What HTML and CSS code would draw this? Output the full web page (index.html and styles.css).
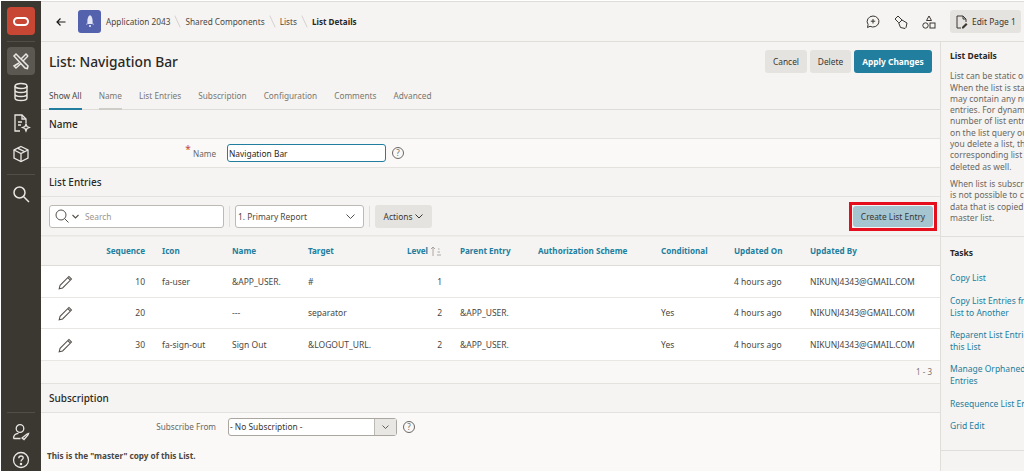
FILE: index.html
```html
<!DOCTYPE html>
<html>
<head>
    <title>List Details</title>
    <link rel="stylesheet" href="styles.css">
</head>
<body>
    <div class="app">
        <nav class="rail">
            <div class="logo"><span class="logo-ring"></span></div>
            <div class="rail-line"></div>
            <a class="rail-item active">
                <svg width="20" height="20" viewBox="0 0 20 20" fill="none" stroke="#e8e6e3" stroke-width="1.5"><path d="M3 5l2-2 12 12-.6 2.6L14 17z"/><path d="M17 5l-2-2-5 5M8 12l-5 3 2 2 5-4.500"/><path d="M12 10l5-5"/></svg>
            </a>
            <a class="rail-item">
                <svg width="18" height="20" viewBox="0 0 18 20" fill="none" stroke="#e8e6e3" stroke-width="1.4"><ellipse cx="9" cy="4" rx="6" ry="2.500"/><path d="M3 4v12c0 1.400 2.700 2.500 6 2.500s6-1.100 6-2.500V4M3 8c0 1.400 2.700 2.500 6 2.500S15 9.400 15 8M3 12c0 1.400 2.700 2.500 6 2.500s6-1.100 6-2.500"/></svg>
            </a>
            <a class="rail-item">
                <svg width="20" height="20" viewBox="0 0 20 20" fill="none" stroke="#e8e6e3" stroke-width="1.3"><path d="M9 18H4V2h7l4 4v4"/><path d="M11 2v4h4M7 9h4M7 12h3"/><path d="M15 11l1 2.500 2.500 1-2.500 1-1 2.500-1-2.500-2.500-1 2.500-1z"/></svg>
            </a>
            <a class="rail-item">
                <svg width="18" height="18" viewBox="0 0 18 18" fill="none" stroke="#e8e6e3" stroke-width="1.3"><path d="M9 1.500l7 3.500v8l-7 3.500L2 13V5z"/><path d="M2 5l7 3.500L16 5M9 8.500v8M5.500 3.200l7 3.500"/></svg>
            </a>
            <div class="rail-line mid"></div>
            <a class="rail-item">
                <svg width="18" height="18" viewBox="0 0 18 18" fill="none" stroke="#e8e6e3" stroke-width="1.5"><circle cx="7.500" cy="7.500" r="5.500"/><path d="M11.500 11.500L17 17"/></svg>
            </a>
            <div class="rail-spacer"></div>
            <div class="rail-line"></div>
            <a class="rail-item foot">
                <svg width="18" height="18" viewBox="0 0 18 18" fill="none" stroke="#e8e6e3" stroke-width="1.3"><circle cx="8" cy="5.500" r="3.800"/><path d="M1.500 15.500c0-3 2-5 5-5.200M1.500 15.500h7M10 15l5-4 1.500-.5-.5 1.500-4 4.500z"/></svg>
            </a>
            <a class="rail-item foot last">
                <svg width="18" height="18" viewBox="0 0 18 18" fill="none" stroke="#e8e6e3" stroke-width="1.3"><circle cx="9" cy="9" r="7.500"/><path d="M6.800 7.200C6.800 5.800 7.800 5 9 5s2.200.8 2.200 2c0 1.500-2.200 1.700-2.200 3.500"/><circle cx="9" cy="13" r=".6" fill="#e8e6e3"/></svg>
            </a>
        </nav>

        <div class="main">
            <header class="topbar">
                <svg class="back" width="10" height="10" viewBox="0 0 10 10" fill="none" stroke="#1d1b19" stroke-width="1.2"><path d="M9.500 5H1M4.500 1.500L1 5l3.500 3.500"/></svg>
                <div class="app-icon">
                    <svg width="10" height="13" viewBox="0 0 10 13"><path d="M5 0c2 1.500 2.600 3.500 2.600 6v3H2.400V6C2.400 3.500 3 1.500 5 0z" fill="#e4e6f5"/><path d="M2.400 7L1 10l1.400-.5zM7.600 7L9 10l-1.400-.5z" fill="#c6cbe9"/><path d="M4 10h2v2H4z" fill="#c6cbe9"/></svg>
                </div>
                <div class="crumbs">
                    <span>Application 2043</span><i class="slash"></i>
                    <span>Shared Components</span><i class="slash"></i>
                    <span>Lists</span><i class="slash"></i>
                    <b>List Details</b>
                </div>
                <div class="top-tools">
                    <svg width="14" height="14" viewBox="0 0 14 14" fill="none" stroke="#3a3632"><path d="M7 1a6 5.500 0 1 1-3 10.300L1.500 12.500l.6-3A6 5.500 0 0 1 7 1zM7 4v4.500M4.800 6.200h4.400"/></svg>
                    <svg width="14" height="14" viewBox="0 0 14 14" fill="none" stroke="#3a3632"><path d="M1 4l3-3 4 4 5 3-1 4.500-1 1-4.500-1-2-5z"/><path d="M8 5L5 8"/></svg>
                    <svg width="14" height="14" viewBox="0 0 14 14" fill="none" stroke="#3a3632"><path d="M7 1l2.500 4.500h-5z"/><circle cx="3.500" cy="10.500" r="2.700"/><rect x="8" y="8" width="5" height="5"/></svg>
                    <button class="btn edit-page">
                        <svg width="14" height="14" viewBox="0 0 14 14" fill="none" stroke="#3a3632"><path d="M6 13H2V1h6l3 3v3M8 1v3h3"/><path d="M7 12l4-4 1.500 1.500-4 4H7z" fill="#3a3632" stroke="none"/></svg>
                        Edit Page 1
                    </button>
                </div>
            </header>

            <div class="columns">
                <div class="content">
                    <div class="title-row">
                        <h1>List: Navigation Bar</h1>
                        <div class="title-actions">
                            <button class="btn cancel">Cancel</button>
                            <button class="btn delete">Delete</button>
                            <button class="btn primary">Apply Changes</button>
                        </div>
                    </div>

                    <div class="tabs">
                        <a class="tab current">Show All</a>
                        <a class="tab hovered">Name</a>
                        <a class="tab">List Entries</a>
                        <a class="tab">Subscription</a>
                        <a class="tab">Configuration</a>
                        <a class="tab">Comments</a>
                        <a class="tab">Advanced</a>
                    </div>

                    <h2 class="section-head">Name</h2>
                    <div class="form-row">
                        <label class="form-label"><sup class="req">*</sup> Name</label>
                        <input class="text-input" type="text" value="Navigation Bar">
                        <span class="help">?</span>
                    </div>

                    <h2 class="section-head">List Entries</h2>
                    <div class="toolbar">
                        <div class="search-box">
                            <svg width="14" height="14" viewBox="0 0 14 14" fill="none" stroke="#55504b"><circle cx="6" cy="6" r="5"/><path d="M9.500 9.500L13.500 13.500"/></svg>
                            <svg width="7" height="5" viewBox="0 0 7 5" fill="none" stroke="#55504b" stroke-width="1.100"><path d="M.5 1l3 3 3-3"/></svg>
                            <span class="placeholder">Search</span>
                        </div>
                        <i class="tool-sep"></i>
                        <div class="report-select">
                            <span>1. Primary Report</span>
                            <svg width="9" height="5" viewBox="0 0 9 5" fill="none" stroke="#55504b"><path d="M.5.5l4 4 4-4"/></svg>
                        </div>
                        <i class="tool-sep"></i>
                        <button class="btn actions">Actions
                            <svg width="8" height="5" viewBox="0 0 8 5" fill="none" stroke="#3a3632"><path d="M.5.5L4 4 7.500.5"/></svg>
                        </button>
                        <div class="create-mark">
                            <button class="btn create">Create List Entry</button>
                        </div>
                    </div>

                    <table class="report">
                        <colgroup>
                            <col class="c-edit"><col class="c-seq"><col class="c-icon"><col class="c-name"><col class="c-target"><col class="c-level"><col class="c-parent"><col class="c-auth"><col class="c-cond"><col class="c-on"><col class="c-by">
                        </colgroup>
                        <thead>
                            <tr>
                                <th></th>
                                <th class="num">Sequence</th>
                                <th>Icon</th>
                                <th>Name</th>
                                <th>Target</th>
                                <th class="num">Level
                                    <svg class="sort" width="12" height="10" viewBox="0 0 12 10" fill="none" stroke="#9a9690" stroke-width=".8"><path d="M3 10V1M1 3l2-2 2 2"/><path d="M8 3h1.500M7.500 6h2.500M7 9h4"/></svg>
                                </th>
                                <th>Parent Entry</th>
                                <th>Authorization Scheme</th>
                                <th>Conditional</th>
                                <th>Updated On</th>
                                <th>Updated By</th>
                            </tr>
                        </thead>
                        <tbody>
                            <tr>
                                <td class="edit"><svg width="15" height="15" viewBox="0 0 13 13" fill="none" stroke="#55504b" stroke-width=".9"><path d="M1 12l.8-3L9.500 1.300l2.200 2.200L4 11.200zM8.500 2.300l2.200 2.200"/></svg></td>
                                <td class="num">10</td><td>fa-user</td><td>&amp;APP_USER.</td><td>#</td><td class="num">1</td><td></td><td></td><td></td><td>4 hours ago</td><td>NIKUNJ4343@GMAIL.COM</td>
                            </tr>
                            <tr>
                                <td class="edit"><svg width="15" height="15" viewBox="0 0 13 13" fill="none" stroke="#55504b" stroke-width=".9"><path d="M1 12l.8-3L9.500 1.300l2.200 2.200L4 11.200zM8.500 2.300l2.200 2.200"/></svg></td>
                                <td class="num">20</td><td></td><td>---</td><td>separator</td><td class="num">2</td><td>&amp;APP_USER.</td><td></td><td>Yes</td><td>4 hours ago</td><td>NIKUNJ4343@GMAIL.COM</td>
                            </tr>
                            <tr>
                                <td class="edit"><svg width="15" height="15" viewBox="0 0 13 13" fill="none" stroke="#55504b" stroke-width=".9"><path d="M1 12l.8-3L9.500 1.300l2.200 2.200L4 11.200zM8.500 2.300l2.200 2.200"/></svg></td>
                                <td class="num">30</td><td>fa-sign-out</td><td>Sign Out</td><td>&amp;LOGOUT_URL.</td><td class="num">2</td><td>&amp;APP_USER.</td><td></td><td>Yes</td><td>4 hours ago</td><td>NIKUNJ4343@GMAIL.COM</td>
                            </tr>
                        </tbody>
                    </table>
                    <div class="report-footer">1 - 3</div>

                    <h2 class="section-head">Subscription</h2>
                    <div class="form-row sub">
                        <label class="form-label">Subscribe From</label>
                        <div class="sub-select">
                            <span>- No Subscription -</span>
                            <i class="sub-arrow"><svg width="7" height="4" viewBox="0 0 7 4" fill="none" stroke="#55504b" stroke-width=".9"><path d="M.5.5l3 3 3-3"/></svg></i>
                        </div>
                        <span class="help">?</span>
                    </div>
                    <p class="master-note">This is the "master" copy of this List.</p>
                </div>

                <aside class="side">
                    <div class="side-block">
                        <h3>List Details</h3>
                        <p>List can be static or dynamic.<br>When the list is static, it<br>may contain any number of<br>entries. For dynamic lists, the<br>number of list entries depends<br>on the list query output. When<br>you delete a list, the<br>corresponding list entries are<br>deleted as well.</p>
                        <p>When list is subscribed, it<br>is not possible to change the<br>data that is copied from the<br>master list.</p>
                    </div>
                    <div class="side-block tasks">
                        <h3>Tasks</h3>
                        <a>Copy List</a>
                        <a>Copy List Entries from one<br>List to Another</a>
                        <a>Reparent List Entries in<br>this List</a>
                        <a>Manage Orphaned List<br>Entries</a>
                        <a>Resequence List Entries</a>
                        <a>Grid Edit</a>
                    </div>
                </aside>
            </div>
        </div>
    </div>
</body>
</html>
```

FILE: styles.css
```css
* {
    box-sizing: border-box;
}

html, body {
    margin: 0;
    height: 471px;
    overflow: hidden;
}

body {
    font-family: "Noto Sans", sans-serif;
    font-size: 8.4px;
    color: #3a3632;
    background-color: #fff;
    padding: 1px 0 0 1px;
}

.app {
    display: flex;
    height: 470px;
    width: 1023px;
}

.rail {
    width: 40px;
    flex: none;
    display: flex;
    flex-direction: column;
    align-items: center;
    background-color: #3b3731;
    padding-top: 6px;
    overflow: hidden;
}

.logo {
    width: 28px;
    height: 28px;
    background-color: #c74634;
    border-radius: 4px;
    display: flex;
    align-items: center;
    justify-content: center;
}

.logo-ring {
    width: 16px;
    height: 9px;
    border: 2px solid #fff;
    border-radius: 5px;
}

.rail-line {
    width: 28px;
    height: 1px;
    background-color: #514d47;
    margin: 6px 0 5px;
    flex: none;
}

.rail-line.mid {
    margin-top: 3px;
}

.rail-item {
    width: 28px;
    height: 28px;
    flex: none;
    margin-bottom: 3px;
    border-radius: 4px;
    display: flex;
    align-items: center;
    justify-content: center;
}

.rail-item.active {
    background-color: #5b5751;
}

.rail-item.foot {
    margin-bottom: 0;
}

.rail-item.last {
    margin-bottom: -3px;
}

.rail-spacer {
    flex: 1;
}

.main {
    flex: 1;
    min-width: 0;
    display: flex;
    flex-direction: column;
    background-color: #f5f4f2;
    border-top: 1px solid #dedcd9;
}

.topbar {
    height: 40px;
    flex: none;
    display: flex;
    align-items: center;
    padding-left: 15px;
    border-bottom: 1px solid #e0dedb;
}

.back {
    margin-right: 12px;
}

.app-icon {
    width: 23px;
    height: 23px;
    background-color: #5462ae;
    border-radius: 3px;
    display: flex;
    align-items: center;
    justify-content: center;
    margin-right: 5px;
}

.crumbs {
    display: flex;
    align-items: center;
    font-size: 8.25px;
    color: #4b4742;
}

.crumbs b {
    font-size: 8.1px;
    color: #2b2825;
}

.slash {
    width: 1px;
    height: 13px;
    background-color: #d5d2ce;
    transform: rotate(-25deg);
    margin: 0 7px;
}

.top-tools {
    margin-left: auto;
    display: flex;
    align-items: center;
    gap: 14px;
    margin-right: 3px;
}

.btn {
    font-family: inherit;
    font-size: 8.4px;
    color: #3a3632;
    background-color: #e5e3df;
    border: none;
    border-radius: 3px;
    height: 23px;
    padding: 0;
    white-space: nowrap;
}

.edit-page {
    display: flex;
    align-items: center;
    gap: 3px;
    padding-left: 5px;
    width: 71px;
}

.columns {
    flex: 1;
    display: flex;
    min-height: 0;
}

.content {
    width: 900px;
    flex: none;
    border-right: 1px solid #e0dedb;
}

.title-row {
    height: 38px;
    display: flex;
    align-items: center;
    justify-content: space-between;
    padding: 0 8px;
}

.title-row h1 {
    margin: 0;
    font-size: 13.8px;
    font-weight: 500;
    color: #2b2825;
}

.title-actions {
    display: flex;
    gap: 3px;
}

.cancel {
    width: 42px;
}

.delete {
    width: 41px;
}

.btn.primary {
    width: 78px;
    background-color: #227e9e;
    color: #fff;
    font-weight: 700;
}

.tabs {
    height: 30px;
    display: flex;
    gap: 17px;
    padding-left: 8px;
    font-size: 8.25px;
    border-bottom: 1px solid #dedcd9;
}

.tab {
    height: 30px;
    padding-top: 10px;
    color: #7a7670;
    border-bottom: 2px solid transparent;
}

.tab.current {
    color: #4b4742;
    border-bottom-color: #227e9e;
}

.tab.hovered {
    border-bottom-color: #d0cdc9;
}

.section-head {
    margin: 0;
    height: 29px;
    line-height: 28px;
    padding-left: 8px;
    font-size: 10px;
    font-weight: 500;
    color: #2b2825;
    border-bottom: 1px solid #e4e2df;
}

.form-row {
    height: 29px;
    display: flex;
    align-items: center;
    background-color: #faf9f8;
    border-bottom: 1px solid #e4e2df;
}

.form-label {
    width: 176px;
    padding-right: 1px;
    text-align: right;
    font-size: 8.2px;
    color: #6b6762;
    flex: none;
}

.req {
    color: #c74634;
    font-size: 10px;
    line-height: 0;
}

.text-input {
    width: 159px;
    height: 18px;
    margin-left: 10px;
    padding: 0 1px;
    font-family: inherit;
    font-size: 8.4px;
    color: #2b2825;
    border: 1.5px solid #227e9e;
    border-radius: 3px;
    background-color: #fff;
}

.help {
    width: 12px;
    height: 12px;
    margin-left: 6px;
    border: 1px solid #6b6762;
    border-radius: 50%;
    font-size: 8px;
    line-height: 10px;
    text-align: center;
    color: #6b6762;
    flex: none;
}

.toolbar {
    height: 39px;
    display: flex;
    align-items: center;
    padding-left: 8px;
    border-bottom: 1px solid #e9e7e4;
    box-shadow: 0 1px 0 #efedea;
}

.search-box {
    width: 175px;
    height: 23px;
    display: flex;
    align-items: center;
    gap: 3px;
    padding-left: 5px;
    background-color: #fff;
    border: 1px solid #bdb9b4;
    border-radius: 3px;
}

.placeholder {
    margin-left: 3px;
    color: #9a9690;
}

.tool-sep {
    width: 1px;
    height: 21px;
    margin: 0 5px;
    background-color: #e0dedb;
}

.report-select {
    width: 129px;
    height: 23px;
    display: flex;
    align-items: center;
    justify-content: space-between;
    padding: 0 8px 0 2px;
    background-color: #fff;
    border: 1px solid #bdb9b4;
    border-radius: 3px;
    color: #4b4742;
}

.actions {
    display: flex;
    align-items: center;
    gap: 3px;
    width: 57px;
    justify-content: center;
}

.create-mark {
    margin-left: auto;
    margin-right: 3px;
    padding: 1px;
    border: 3px solid #e50e1c;
    display: flex;
}

.create {
    width: 80px;
    height: 21px;
    background-color: #a5c5d1;
}

.report {
    width: 899px;
    table-layout: fixed;
    border-collapse: collapse;
}

.c-edit { width: 49px; }
.c-seq { width: 72px; }
.c-icon { width: 70px; }
.c-name { width: 76px; }
.c-target { width: 92px; }
.c-level { width: 60px; }
.c-parent { width: 78px; }
.c-auth { width: 123px; }
.c-cond { width: 73px; }
.c-on { width: 76px; }
.c-by { width: 130px; }

.report th {
    height: 29px;
    text-align: left;
    font-weight: 700;
    font-size: 8.1px;
    color: #227e9e;
    padding: 0;
    border-bottom: 1px solid #dedcd9;
    white-space: nowrap;
}

.report td {
    height: 32px;
    padding: 0;
    font-size: 8.5px;
    color: #4b4742;
    background-color: #fff;
    border-bottom: 1px solid #e9e7e4;
    white-space: nowrap;
}

.report tr:nth-child(2) td {
    height: 31px;
}

.report .num {
    text-align: right;
    padding-right: 17px;
}

.report th:nth-child(6) {
    padding-right: 32px;
}

.report td:nth-child(6) {
    padding-right: 18px;
}

.sort {
    position: absolute;
    margin-left: 2px;
    margin-top: 1px;
}

.report td.edit {
    text-align: center;
    padding: 4px 0 0 0;
}

.report-footer {
    height: 23px;
    line-height: 22px;
    padding-right: 8px;
    text-align: right;
    font-size: 8px;
    color: #7a7670;
    background-color: #f9f8f7;
    border-bottom: 1px solid #e4e2df;
}

.form-row.sub {
    border-bottom: none;
    height: 28px;
}

.sub-select {
    width: 169px;
    height: 18px;
    margin-left: 11px;
    display: flex;
    align-items: center;
    justify-content: space-between;
    padding-left: 1px;
    background-color: #fff;
    border: 1px solid #aaa6a0;
    border-radius: 3px;
    color: #3a3632;
}

.sub-arrow {
    width: 22px;
    height: 16px;
    display: flex;
    align-items: center;
    justify-content: center;
    background-color: #e9e7e4;
    border-left: 1px solid #bdb9b4;
}

.master-note {
    margin: 0;
    height: 30px;
    padding: 9px 0 0 6px;
    font-size: 8.2px;
    font-weight: 700;
    color: #4b4742;
    background-color: #faf9f8;
}

.side {
    flex: 1;
    overflow: hidden;
    white-space: nowrap;
    background-color: #f5f4f2;
    font-size: 8.5px;
    color: #6b6762;
}

.side-block {
    padding: 8px 0 7px 9px;
    border-bottom: 1px solid #e0dedb;
    line-height: 11.3px;
}

.side-block h3 {
    margin: 0 0 9px;
    font-size: 8.5px;
    font-weight: 700;
    color: #2b2825;
}

.side-block p {
    margin: 0 0 6px;
}

.tasks {
    padding-top: 10px;
}

.tasks h3 {
    margin-bottom: 14px;
}

.tasks a {
    display: block;
    color: #227e9e;
    margin-bottom: 11.500px;
}
```
